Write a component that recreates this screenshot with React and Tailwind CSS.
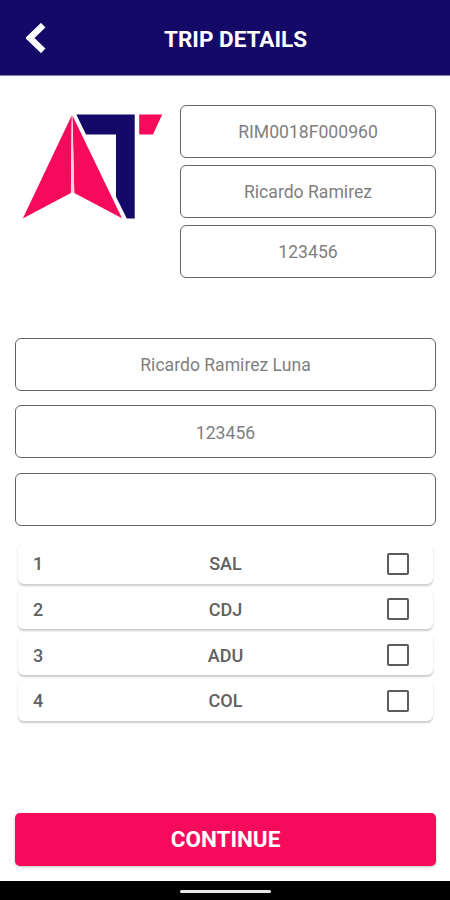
const stops = ["SAL", "CDJ", "ADU", "COL"];

function Field({ children, className = "" }) {
  return (
    <div
      className={`flex h-[53px] items-center justify-center rounded-md border border-[#666] bg-white pt-[2px] text-[17.6px] text-[#7f7f7f] ${className}`}
    >
      <span>{children}</span>
    </div>
  );
}

function Logo() {
  return (
    <svg className="h-[106px] w-[141px]" viewBox="22 114 141 106" aria-hidden="true">
      <g fill="#f60b5c">
        <path d="M71.7 115.5 L22.8 218.5 L70.9 193Z" />
        <path d="M72.5 115.5 L122 218.3 L74.3 193Z" />
        <path d="M139.2 114.6H162.2L153 134.6H139.2Z" />
      </g>
      <path d="M76.3 114.6H134.7V218.4H126.8L116 196.8V134.6H86Z" fill="#150968" />
      <path d="M71.8 122 L71 193 H74.2 L72.4 122Z" fill="#fbd3e0" />
    </svg>
  );
}

export default function App() {
  return (
    <div className="flex h-[900px] w-[450px] flex-col overflow-hidden bg-white font-['Roboto',sans-serif]">
      <header className="grid h-[76px] shrink-0 grid-cols-[90px_1fr_69px] items-center border-b border-[#8580ac] bg-[#150968] pt-1">
        <button aria-label="Back" className="flex pb-[3px] pl-[26px]">
          <svg className="h-[30px] w-5" viewBox="0 0 20 30" fill="none" aria-hidden="true">
            <path d="M17.2 2.2 L3.9 15 L17.2 27.8" stroke="#fff" strokeWidth="6.4" />
          </svg>
        </button>
        <h1 className="text-center text-[22.5px] leading-none font-bold text-white">
          <span>TRIP DETAILS</span>
        </h1>
      </header>

      <main className="flex flex-1 flex-col pr-[14px] pl-[15px]">
        <section className="flex pt-[29px]">
          <div className="w-[165px] shrink-0 pt-[9px] pl-[7px]">
            <Logo />
          </div>
          <div className="flex w-64 shrink-0 flex-col gap-[7px]">
            <Field>RIM0018F000960</Field>
            <Field>Ricardo Ramirez</Field>
            <Field>123456</Field>
          </div>
        </section>

        <section className="mt-[60px] flex w-[421px] flex-col gap-[14.4px]">
          <Field>Ricardo Ramirez Luna</Field>
          <Field>123456</Field>
          <Field />
        </section>

        <ul className="mt-[18px] ml-[3px] flex w-[415px] flex-col gap-[5.7px]">
          {stops.map((stop, index) => (
            <li
              key={stop}
              className="grid h-10 grid-cols-[64px_1fr_64px] items-center rounded-md bg-white text-[18px] font-medium text-[#606060] shadow-[0_1.5px_2px_rgba(0,0,0,0.2)]"
            >
              <span className="pl-[15px]">{index + 1}</span>
              <span className="text-center">{stop}</span>
              <span className="ml-[18px] size-[22px] rounded-[2px] border-2 border-[#5c5c5c]" />
            </li>
          ))}
        </ul>

        <button className="mt-auto mb-[15px] h-[53px] w-[421px] shrink-0 rounded-[5px] bg-[#f60b5c] text-[22.5px] font-bold text-white shadow-[0_1px_3px_rgba(0,0,0,0.25)]">
          CONTINUE
        </button>
      </main>

      <footer className="flex h-[19px] shrink-0 justify-center bg-black pt-[9px]">
        <div className="h-[3px] w-[91px] rounded-sm bg-[#e8e8e8]" />
      </footer>
    </div>
  );
}
